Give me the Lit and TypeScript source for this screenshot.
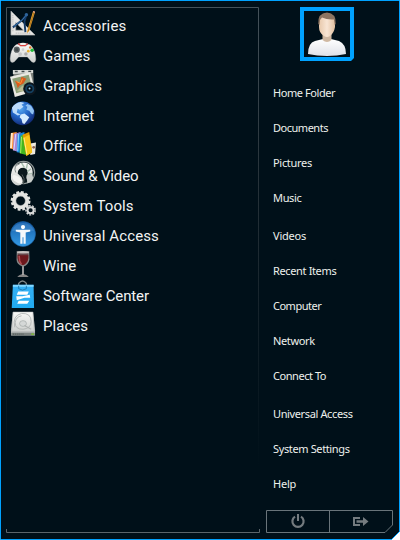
import { LitElement, html, css, svg } from "lit";
import { customElement } from "lit/decorators.js";

const icons: Record<string, unknown> = {
  accessories: svg`
    <path d="M1 0V25H26ZM6 12L14 20H6Z" fill="#e6e6e4" fill-rule="evenodd" stroke="#a9adad" stroke-width=".7"/>
    <path d="M3 4V22M6 23H22" stroke="#aaa" stroke-dasharray="1 1"/>
    <path d="M18 3L12 10L3 17M17 4L15 11L16 22" fill="none" stroke="#143a66" stroke-width="2"/>
    <path d="M17 4L13 9L4 16" fill="none" stroke="#4586bf" stroke-width=".8"/>
    <circle cx="17" cy="4" r="1.8" fill="#2d639a"/>
    <path d="M24 0L18 20L17.4 23L20 20.7L26 1Z" fill="#e5a32c"/><path d="M25 1L19 21" stroke="#8e5617" stroke-width=".7"/>
    <path d="M23.8 1L24.3 0L26 .5L25.5 2Z" fill="#e8a399"/>`,
  games: svg`
    <g transform="translate(0 1)"><path d="M5 4Q7 1.5 10 3L11 4H16L17 3Q20 1.5 22 4Q26.5 9 26.8 18Q26 23 22.5 20.5L18 15.5H9L4.5 20.5Q0 23 .2 17Q1 8 5 4Z" fill="url(#pale)" stroke="#bbb" stroke-width=".4"/>
    <path d="M9 1.8Q13.5 -.2 18 1.8L16.5 4H10.5Z" fill="#f0f0ee"/>
    <path d="M8.5 1.6L11 3.8H16L18.5 1.6" fill="none" stroke="#d8413e" stroke-width="1.2"/>
    <circle cx="7" cy="8" r="3.2" fill="#5b6263"/><circle cx="7" cy="8" r="1.7" fill="#42494b"/>
    <circle cx="10.5" cy="12.6" r="2" fill="#c3c5c5"/><circle cx="16.5" cy="12.6" r="1.8" fill="#aaa"/>
    <circle cx="13.5" cy="8" r="1.4" fill="#cdd1d0"/>
    <circle cx="23" cy="8.6" r="1.8" fill="#21b838"/><circle cx="19" cy="9.6" r="1.4" fill="#e6af2d"/><circle cx="21" cy="5.8" r="1.3" fill="#e4792b"/></g>`,
  graphics: svg`
    <path d="M3 -1L24 -1L25 20L5 21Z" fill="#7b807b"/><path d="M3 -1H24V2L3 3Z" fill="#d9dbd7"/>
    <path d="M5 .5H8M12 .5H15M19 .5H22" stroke="#404849" stroke-width="1.5"/>
    <path d="M0 6L21 1L26 21L5 27Z" fill="#eae9e2"/><path d="M2.3 8L19.5 4L23 18L6.5 23Z" fill="#8b9f77"/>
    <path d="M5 10L10 12L12 6L17 8L14 13L10 15L8 18L7 14Z" fill="#d95b1d"/><path d="M7 11L11 13L13 8" fill="none" stroke="#ff9a35"/>
    <path d="M7 21L13 15L17 18L15 21Z" fill="#b7bb91"/>
    <circle cx="20.5" cy="18.5" r="6.8" fill="#0d161e"/><circle cx="20.5" cy="18.5" r="4.7" fill="#14405f"/><circle cx="20.5" cy="18.5" r="2.8" fill="#061019"/><circle cx="20.3" cy="18.2" r="1" fill="#a5d4ec"/>`,
  internet: svg`
    <circle cx="13.2" cy="12.9" r="12.4" fill="url(#globe)"/>
    <path d="M2 7Q5 2 11 1L15 2L12 4L14 6L10 9L8 8L7 12L11 14L8 15L3 12Z" fill="#bcdcfb"/>
    <path d="M11 14L15 13L20 17L18 20L15 24L13 23L12 19L10 17Z" fill="#d5ebff"/>
    <path d="M18 3L22 5L25 10L24 14L22 13L20 10L17 9L18 6L16 5Z" fill="#8fc2f2"/>`,
  office: svg`
    <path d="M1 2L7 1L6 20L0 18Z" fill="#ff912c"/><path d="M1 2L3 2L2 18L0 18Z" fill="#ffe7c8"/>
    <path d="M4 3L11 1L10 22L3 20Z" fill="#a988d7"/><path d="M6 3L4 20" stroke="#e2d8ff"/>
    <path d="M8 3L15 1L15 23L7 22Z" fill="#1788dd"/><path d="M9 3L8 21" stroke="#8cdaff"/>
    <path d="M11 5L19 3L17 25L10 23Z" fill="#43b61e"/><path d="M12 6L11 23" stroke="#a7ef66"/>
    <path d="M21 13L27 12L26 24L21 25Z" fill="#eeeae0"/><circle cx="24.6" cy="17" r="1.4" fill="#8a6254"/>
    <path d="M13 4L20 1L23 22L17 26Z" fill="#e19a00"/><path d="M14 7L20 4L23 22L17 26Z" fill="#f8c518"/><path d="M14.5 7L17.5 24" stroke="#fff08c"/>`,
  sound: svg`
    <circle cx="14" cy="12" r="11.6" fill="#0b191d" stroke="#8d9695" stroke-width="1.2"/>
    <path d="M1 14Q2 4 11 2Q20 0 23 8Q25 15 20 20L17 18Q21 8 14 7Q8 7 8 13L12 17Q15 23 11 25Q4 27 1 19Z" fill="url(#pale)"/>
    <path d="M12 2L15 7M18 3L17 8M22 8L18 11M23 13L18 14" stroke="#a9c0af" stroke-width="1.5"/>
    <path d="M6 12Q3 5 10 3" fill="none" stroke="#7f8887" stroke-width="1"/>
    <ellipse cx="7.5" cy="19" rx="3" ry="6" transform="rotate(-52 7.5 19)" fill="#f4f4f2"/>
    <path d="M17 15L22 13Q26 17 22 22L18 23Z" fill="#c9cecb"/><path d="M12.5 14Q16 18 14 24" fill="none" stroke="#555e5d"/>`,
  tools: svg`
    <circle cx="11" cy="10.2" r="6.8" fill="none" stroke="#e4e4e1" stroke-width="4"/>
    <circle cx="11" cy="10.2" r="9.1" fill="none" stroke="#e4e4e1" stroke-width="2.4" stroke-dasharray="2.9 1.865"/>
    <circle cx="11" cy="10.2" r="4.9" fill="none" stroke="#969b9a" stroke-width=".5"/>
    <circle cx="21.4" cy="20" r="3.2" fill="none" stroke="#d9dada" stroke-width="2.1"/>
    <circle cx="21.4" cy="20" r="4.8" fill="none" stroke="#d9dada" stroke-width="1.5" stroke-dasharray="2 1.35"/>`,
  access: svg`
    <circle cx="13.5" cy="13.5" r="13" fill="url(#blue)" stroke="#1a62a6" stroke-width=".6"/>
    <path d="M2 10Q5 2 13.5 2Q22 2 25 10Q14 12 2 10Z" fill="#8cc5ef" opacity=".2"/>
    <circle cx="13.5" cy="6.3" r="2.2" fill="#fff"/><path d="M6 9H21V11L16.3 12V23.5H14V17H13V23.5H10.7V12L6 11Z" fill="#f5f8fb"/>`,
  wine: svg`
    <path d="M7 0H20L20.2 9Q19 14.5 14.3 16V24Q18 25 19.5 27H7.5Q9 25 12.7 24V16Q7 14 6.8 9Z" fill="#858484"/>
    <path d="M7.8 4H19.2Q19.8 12 14.5 14.5H12.5Q7 12 7.8 4Z" fill="#6c171c"/><path d="M9.5 5L10 10Q10.5 12.5 12 13.5" fill="none" stroke="#b14e53" stroke-width="1.6"/>
    <ellipse cx="13.5" cy="1.6" rx="6.3" ry="1.5" fill="#c5c1bf"/><path d="M8.3 2.6H18.8V4.4H8.3Z" fill="#674649"/><path d="M13.5 16V25" stroke="#cfcccc"/>`,
  software: svg`
    <path d="M9 6V2.5Q13 -2.4 17 2.5V6" fill="none" stroke="#7c8587" stroke-width="1.4"/>
    <path d="M3 4H24.5L25 28H1.8Z" fill="url(#bag)"/><path d="M3 4H24.5V6H3Z" fill="#83d7ff"/>
    <path d="M9 5V8Q13 11 17 8V5" fill="none" stroke="#207bb4" stroke-width="1"/>
    <path d="M8.5 11H19.5L18 14.2H7ZM6.5 15.8H13L20.5 14.2L21 17.4H15L7 20ZM9 20.5H20L18 23.7H7.5Z" fill="#fff"/>`,
  places: svg`
    <path d="M3 1H24L26 20V25.5H1V20Z" fill="#bfc3c2"/><path d="M3.2 1H23.8L25.3 21.5H1.7Z" fill="url(#pale)" stroke="#a8aaaa" stroke-width=".5"/>
    <path d="M5 17Q2 5 12 2.5Q22 2 22 11Q22 18 13.5 19Q5 19 5.5 12Q6 6 12 5" fill="none" stroke="#a9adac" stroke-width=".8"/>
    <ellipse cx="13.5" cy="13" rx="3.6" ry="3" fill="#d5d8d7" stroke="#a2a8a7" stroke-width=".7"/><path d="M15 15L22 19" stroke="#aeb1b0" stroke-width="1.2"/>
    <path d="M1.3 22.5H25.7V25.3H1.3Z" fill="#7e8583"/><path d="M3 24H15" stroke="#444d4c" stroke-dasharray="1 1"/><path d="M22 24H25" stroke="#80c82c" stroke-width="1.3"/>`,
};

// icon, label, tracking in px
const categories: [string, string, number][] = [
  ["accessories", "Accessories", 0.13], ["games", "Games", 0.02], ["graphics", "Graphics", -0.03],
  ["internet", "Internet", -0.03], ["office", "Office", -0.15], ["sound", "Sound & Video", -0.16],
  ["tools", "System Tools", 0.05], ["access", "Universal Access", 0.12], ["wine", "Wine", 0],
  ["software", "Software Center", -0.11], ["places", "Places", 0.05],
];

// label, tracking in px
const groups: [string, number][][] = [
  [["Home Folder", -0.43], ["Documents", -0.48], ["Pictures", -0.3], ["Music", -0.35]],
  [["Videos", -0.2], ["Recent Items", -0.36], ["Computer", -0.5], ["Network", -0.35], ["Connect To", -0.45]],
  [["Universal Access", -0.37], ["System Settings", -0.37], ["Help", -0.2]],
];

@customElement("app-root")
export class AppRoot extends LitElement {
  static styles = css`
    :host { display: block; width: 400px; height: 540px; background: #fff; }
    .menu { position: relative; display: grid; grid-template-columns: 260px 140px; height: 540px; }
    .frame { position: absolute; inset: 0; }
    .left { position: relative; padding: 11px 0 0 10px; }
    .row { display: flex; align-items: center; height: 30px; gap: 7px; font: 15px Roboto, sans-serif; color: #f3f4f4; white-space: nowrap; }
    .icon { width: 26px; height: 26px; flex: none; margin-top: -5px; overflow: visible; }
    .right { position: relative; display: flex; flex-direction: column; padding-top: 7px; }
    .avatar { width: 54px; height: 54px; margin-left: 40px; }
    .groups { display: flex; flex-direction: column; gap: 3px; margin: 14px 0 0 13px; }
    .link { height: 35px; line-height: 35px; font-family: "Noto Sans", sans-serif; font-size: 11px; color: #eef0ed; white-space: nowrap; }
    .actions { width: 128px; height: 23px; margin: 9px 0 0 6px; }
  `;

  render() {
    return html`
      <div class="menu">
        <svg class="frame" width="400" height="540" viewBox="0 0 400 540">
          <defs><linearGradient id="fade" gradientUnits="userSpaceOnUse" x1="0" y1="7" x2="0" y2="468">
            <stop stop-color="#45525a"/><stop offset=".35" stop-color="#28343b"/><stop offset="1" stop-color="#001019"/>
          </linearGradient></defs>
          <path d="M.5 .5H399.5V531.5L391.5 539.5H.5Z" fill="#001019" stroke="#00a2ff"/>
          <path d="M6.5 468V7.5H258.5V468" fill="none" stroke="url(#fade)"/>
          <path d="M6.5 529V532.5H259.5V529" fill="none" stroke="#5b656b"/>
        </svg>
        <div class="left">
          ${categories.map(([id, label, track]) => html`<div class="row">
            <svg class="icon" viewBox="0 0 27 27">
              <defs>
                <linearGradient id="pale" x2="0" y2="1"><stop stop-color="#fafaf8"/><stop offset="1" stop-color="#cccfcd"/></linearGradient>
                <radialGradient id="globe" cx=".4" cy=".3" r=".7"><stop stop-color="#58a9f0"/><stop offset=".5" stop-color="#2467c9"/><stop offset="1" stop-color="#112b77"/></radialGradient>
                <linearGradient id="blue" x2="0" y2="1"><stop stop-color="#175da8"/><stop offset="1" stop-color="#349be5"/></linearGradient>
                <linearGradient id="bag" x2="0" y2="1"><stop stop-color="#36b1f5"/><stop offset="1" stop-color="#20aaf1"/></linearGradient>
              </defs>
              ${icons[id]}
            </svg><span style="letter-spacing:${track}px">${label}</span></div>`)}
        </div>
        <div class="right">
          <svg class="avatar" viewBox="0 0 54 54">
            <defs>
              <linearGradient id="skin"><stop stop-color="#e7c8ab"/><stop offset=".5" stop-color="#f8e5d4"/><stop offset="1" stop-color="#e0bf9f"/></linearGradient>
              <linearGradient id="shirt" x2="0" y2="1"><stop stop-color="#fff"/><stop offset="1" stop-color="#dfe1e8"/></linearGradient>
            </defs>
            <path d="M0 0H54V51L51 54H0ZM4 4V50H50V4Z" fill="#00a2ff" fill-rule="evenodd"/>
            <path d="M8 47Q8 36 15 34L23 32Q27 36 31 32L39 34Q46 37 46 47Q37 49 27 49Q17 49 8 47Z" fill="url(#shirt)"/>
            <path d="M22.5 26H31.5V33Q27 37 22.5 33Z" fill="#cfb8a2"/>
            <path d="M19 15Q19 7 27 6Q35 7 35 15V20Q34 26 30 29Q27 31 24 29Q19 26 19 20Z" fill="url(#skin)"/>
            <path d="M18.3 17Q17.5 6 27 5.5Q36.3 6 35.7 17L34.7 18L34 12.5Q27 13 22 10.5L20 13L19.5 18Z" fill="#8d7461"/>
          </svg>
          <div class="groups">${groups.map((g) => html`<div>${g.map(([label, track]) => html`<div class="link" style="letter-spacing:${track}px">${label}</div>`)}</div>`)}</div>
          <svg class="actions" viewBox="0 0 128 23">
            <path d="M.5 .5H126.5V15L119 22.5H.5ZM63.5 .5V22.5" fill="none" stroke="#69747a"/>
            <path d="M29 6.6A5.6 5.6 0 1 0 35 6.6" fill="none" stroke="#747b7f" stroke-width="2.2"/><path d="M32 4V11" stroke="#747b7f" stroke-width="2"/>
            <path d="M94 8H88V15H94" fill="none" stroke="#747b7f" stroke-width="2"/><path d="M90.5 10.3H97V7L102.5 11.5L97 16V12.7H90.5Z" fill="#747b7f"/>
          </svg>
        </div>
      </div>`;
  }
}
